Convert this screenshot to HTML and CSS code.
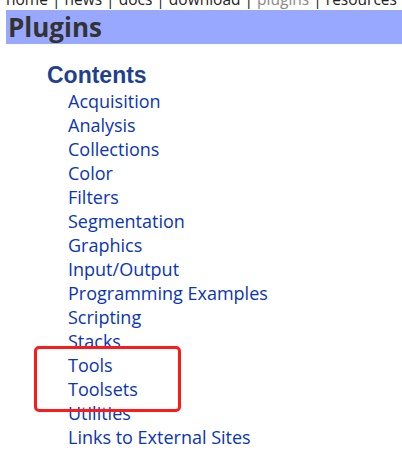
FILE: index.html
```html
<!DOCTYPE html>
<html>
<head>
<meta charset="utf-8">
<link rel="stylesheet" href="styles.css">
</head>
<body>
<div class="nav"><a href="#">home</a> | <a href="#">news</a> | <a href="#">docs</a> | <a href="#">download</a> | <span class="current">plugins</span> | <a href="#">resources</a></div>
<h1 class="title">Plugins</h1>
<div class="toc">
  <h2 class="toc-head">Contents</h2>
  <ul class="toc-list">
    <li><a href="#">Acquisition</a></li>
    <li><a href="#">Analysis</a></li>
    <li><a href="#">Collections</a></li>
    <li><a href="#">Color</a></li>
    <li><a href="#">Filters</a></li>
    <li><a href="#">Segmentation</a></li>
    <li><a href="#">Graphics</a></li>
    <li><a href="#">Input/Output</a></li>
    <li><a href="#">Programming Examples</a></li>
    <li><a href="#">Scripting</a></li>
    <li><a href="#">Stacks</a></li>
    <li class="marked"><a href="#">Tools</a><div class="highlight"></div></li>
    <li><a href="#">Toolsets</a></li>
    <li><a href="#">Utilities</a></li>
    <li><a href="#">Links to External Sites</a></li>
  </ul>
</div>
</body>
</html>
```
FILE: styles.css
```css
html, body {
  margin: 0;
  padding: 0;
  background: #fff;
  overflow: hidden;
}
body {
  padding: 0 0 0 6px;
  font-family: "Open Sans", "Noto Sans", sans-serif;
}
.nav {
  margin-top: -12px;
  height: 22px;
  font-size: 15.5px;
  line-height: 22px;
  color: #222;
  white-space: nowrap;
}
.nav a {
  color: #222;
  text-decoration: none;
}
.nav .current {
  color: #888;
}
.title {
  margin: 0;
  height: 34px;
  background: #99a8ff;
  color: #333;
  font-size: 26px;
  line-height: 34px;
  font-weight: bold;
  padding-left: 2px;
}
.toc {
  padding-left: 41px;
  padding-top: 18px;
}
.toc-head {
  margin: 0;
  font-family: "Liberation Sans", Arial, sans-serif;
  font-size: 23px;
  line-height: 27px;
  color: #1f3f8f;
  font-weight: bold;
}
.toc-list {
  list-style: none;
  margin: 0;
  padding: 0 0 0 21px;
}
.toc-list li {
  font-size: 18px;
  line-height: 24px;
  height: 24px;
}
.toc-list a {
  color: #0a35b8;
  text-decoration: none;
}
.marked {
  position: relative;
}
.highlight {
  position: absolute;
  left: -34px;
  top: -7px;
  width: 141px;
  height: 60px;
  border: 3.5px solid #ff1a1a;
  border-radius: 5px;
}
```
